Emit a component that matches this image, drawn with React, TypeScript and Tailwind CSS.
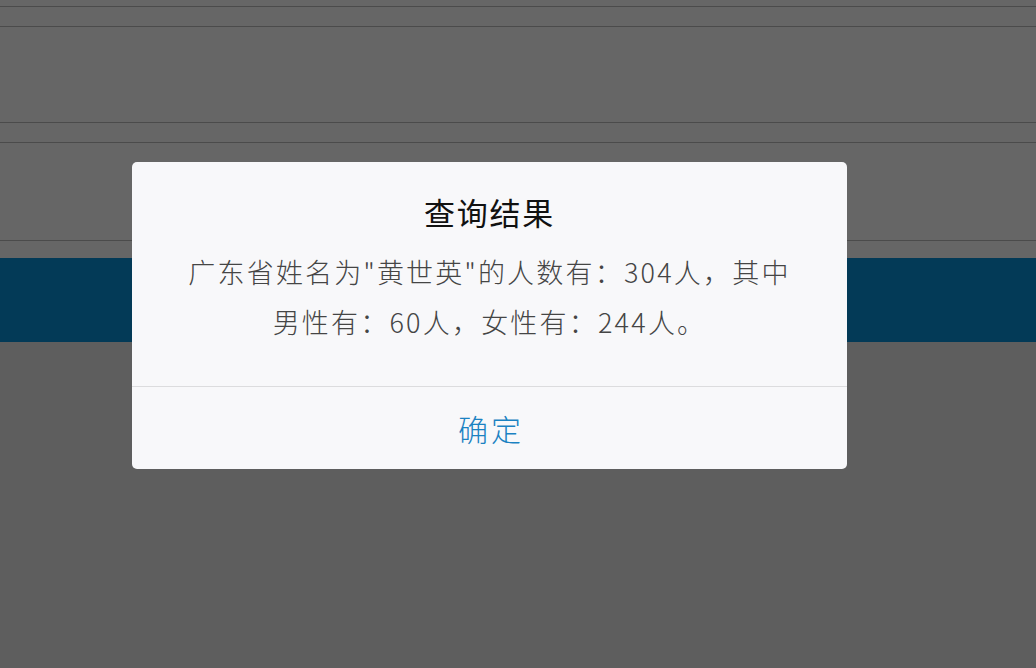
import React from "react";

const font = { fontFamily: '"Noto Sans CJK SC", "Noto Sans", sans-serif' };

// background page rows behind the dim overlay
function BackgroundPage() {
  return (
    <div className="flex h-[668px] flex-col bg-[#5f5f5f]">
      <div className="h-[6px] bg-[#666666]" />
      <div className="h-px bg-[#4b4b4b]" />
      <div className="h-[19px] bg-[#666666]" />
      <div className="h-px bg-[#4b4b4b]" />
      <div className="h-[95px] bg-[#666666]" />
      <div className="h-px bg-[#4b4b4b]" />
      <div className="h-[19px] bg-[#666666]" />
      <div className="h-px bg-[#4b4b4b]" />
      <div className="h-[97px] bg-[#666666]" />
      <div className="h-px bg-[#4b4b4b]" />
      <div className="h-[17px] bg-[#666666]" />
      <div className="h-[84px] bg-[#033a57]" />
      <div className="flex-1 bg-[#5e5e5e]" />
    </div>
  );
}

function ResultDialog() {
  return (
    <div className="flex h-[307px] w-[715px] flex-col overflow-hidden rounded-[5px] bg-[#f8f8fa]" style={font}>
      <div className="flex flex-col items-center pt-[30px] pb-[39px]">
        <h2 className="text-[31px] leading-[40px] tracking-[1.8px] text-[#111111]">查询结果</h2>
        <p className="mt-[15px] px-[40px] text-center text-[27px] font-light leading-[50px] tracking-[2.2px] text-[#454545]">
          广东省姓名为"黄世英"的人数有：304人，其中
          <br />
          男性有：60人，女性有：244人。
        </p>
      </div>
      <div className="h-px bg-[#dcdcde]" />
      <button className="flex flex-1 items-center justify-center pl-[3px] text-[30px] font-light tracking-[3px] text-[#1b82c2]">
        确定
      </button>
    </div>
  );
}

export default function App() {
  return (
    <div className="relative h-[668px] w-[1036px] overflow-hidden">
      <BackgroundPage />
      <div className="absolute inset-0 pl-[132px] pt-[162px]">
        <ResultDialog />
      </div>
    </div>
  );
}
